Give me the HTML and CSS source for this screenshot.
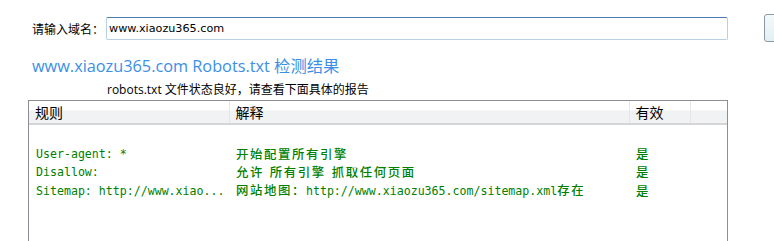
FILE: index.html
```html
<!DOCTYPE html>
<html lang="zh-CN">
<head>
    <meta charset="UTF-8">
    <title>Robots.txt 检测</title>
    <link rel="stylesheet" href="styles.css">
</head>
<body>
    <div class="search-row">
        <label for="domain">请输入域名：</label>
        <input type="text" id="domain" value="www.xiaozu365.com">
        <button type="button" class="check-btn"></button>
    </div>

    <h1 class="result-title">www.xiaozu365.com Robots.txt 检测结果</h1>
    <p class="status">robots.txt 文件状态良好，请查看下面具体的报告</p>

    <div class="report">
        <table>
            <colgroup>
                <col class="col-rule">
                <col class="col-desc">
                <col class="col-valid">
                <col>
            </colgroup>
            <thead>
                <tr>
                    <th>规则</th>
                    <th>解释</th>
                    <th>有效</th>
                    <th></th>
                </tr>
            </thead>
            <tbody>
                <tr>
                    <td class="mono">User-agent: *</td>
                    <td>开始配置所有引擎</td>
                    <td>是</td>
                    <td></td>
                </tr>
                <tr>
                    <td class="mono">Disallow:</td>
                    <td class="spaced">允许 所有引擎 抓取任何页面</td>
                    <td>是</td>
                    <td></td>
                </tr>
                <tr>
                    <td class="mono">Sitemap: http://www.xiao...</td>
                    <td>网站地图：<span class="mono">http://www.xiaozu365.com/sitemap.xml</span>存在</td>
                    <td>是</td>
                    <td></td>
                </tr>
            </tbody>
        </table>
    </div>
</body>
</html>
```

FILE: styles.css
```css
* {
    margin: 0;
    padding: 0;
    box-sizing: border-box;
}

body {
    background-color: #fff;
    font-family: 'Noto Sans CJK SC', sans-serif;
    font-size: 12px;
    color: #000;
    overflow: hidden;
}

.search-row {
    display: flex;
    align-items: center;
    padding: 14px 0 0 32px;
    height: 42px;
}

.search-row > * {
    flex-shrink: 0;
}

.search-row label {
    font-size: 12px;
    width: 74px;
}

.search-row input {
    width: 622px;
    height: 23px;
    border: 1px solid #b8d0e4;
    border-top-color: #4a7db4;
    border-radius: 2px;
    padding: 0 2px;
    font-family: 'DejaVu Sans', sans-serif;
    font-size: 11.2px;
    color: #000;
    outline: none;
}

.check-btn {
    width: 20px;
    height: 28px;
    margin-left: 36px;
    border: 1px solid #8c9aa6;
    border-radius: 3px;
    background: linear-gradient(#f4f9fb, #e2eff3);
}

.result-title {
    margin: 13px 0 0 32px;
    font-family: 'Open Sans', 'Noto Sans CJK SC', sans-serif;
    font-weight: normal;
    font-size: 16.3px;
    line-height: 22px;
    color: #3b8fe6;
}

.status {
    margin: 5px 0 0 107px;
    line-height: 16px;
    font-family: 'Open Sans', 'Noto Sans CJK SC', sans-serif;
}

.report {
    margin: 2px 0 0 28px;
    width: 700px;
    height: 200px;
    border: 1px solid #8d8d96;
    border-bottom: none;
}

table {
    width: 100%;
    border-collapse: collapse;
    table-layout: fixed;
}

.col-rule {
    width: 200px;
}

.col-desc {
    width: 400px;
}

.col-valid {
    width: 61px;
}

th {
    height: 23px;
    padding: 0 0 0 6px;
    text-align: left;
    font-weight: normal;
    font-size: 14px;
    background: linear-gradient(#ffffff 0%, #ffffff 40%, #f1f2f4 45%, #f1f2f4 100%);
    border-right: 1px solid #e6e6e8;
    border-bottom: 2px solid #d5d5d8;
}

th:last-child {
    border-right: none;
}

tbody tr:first-child td {
    padding-top: 20px;
}

td {
    padding: 0 0 0 7px;
    height: 18px;
    line-height: 18px;
    font-size: 12.4px;
    font-weight: 500;
    letter-spacing: 1.6px;
    color: #008000;
    white-space: nowrap;
    overflow: hidden;
}

.spaced {
    word-spacing: 1.5px;
}

.mono {
    font-family: 'DejaVu Sans Mono', monospace;
    font-size: 11.6px;
    font-weight: normal;
    letter-spacing: 0;
}
```
